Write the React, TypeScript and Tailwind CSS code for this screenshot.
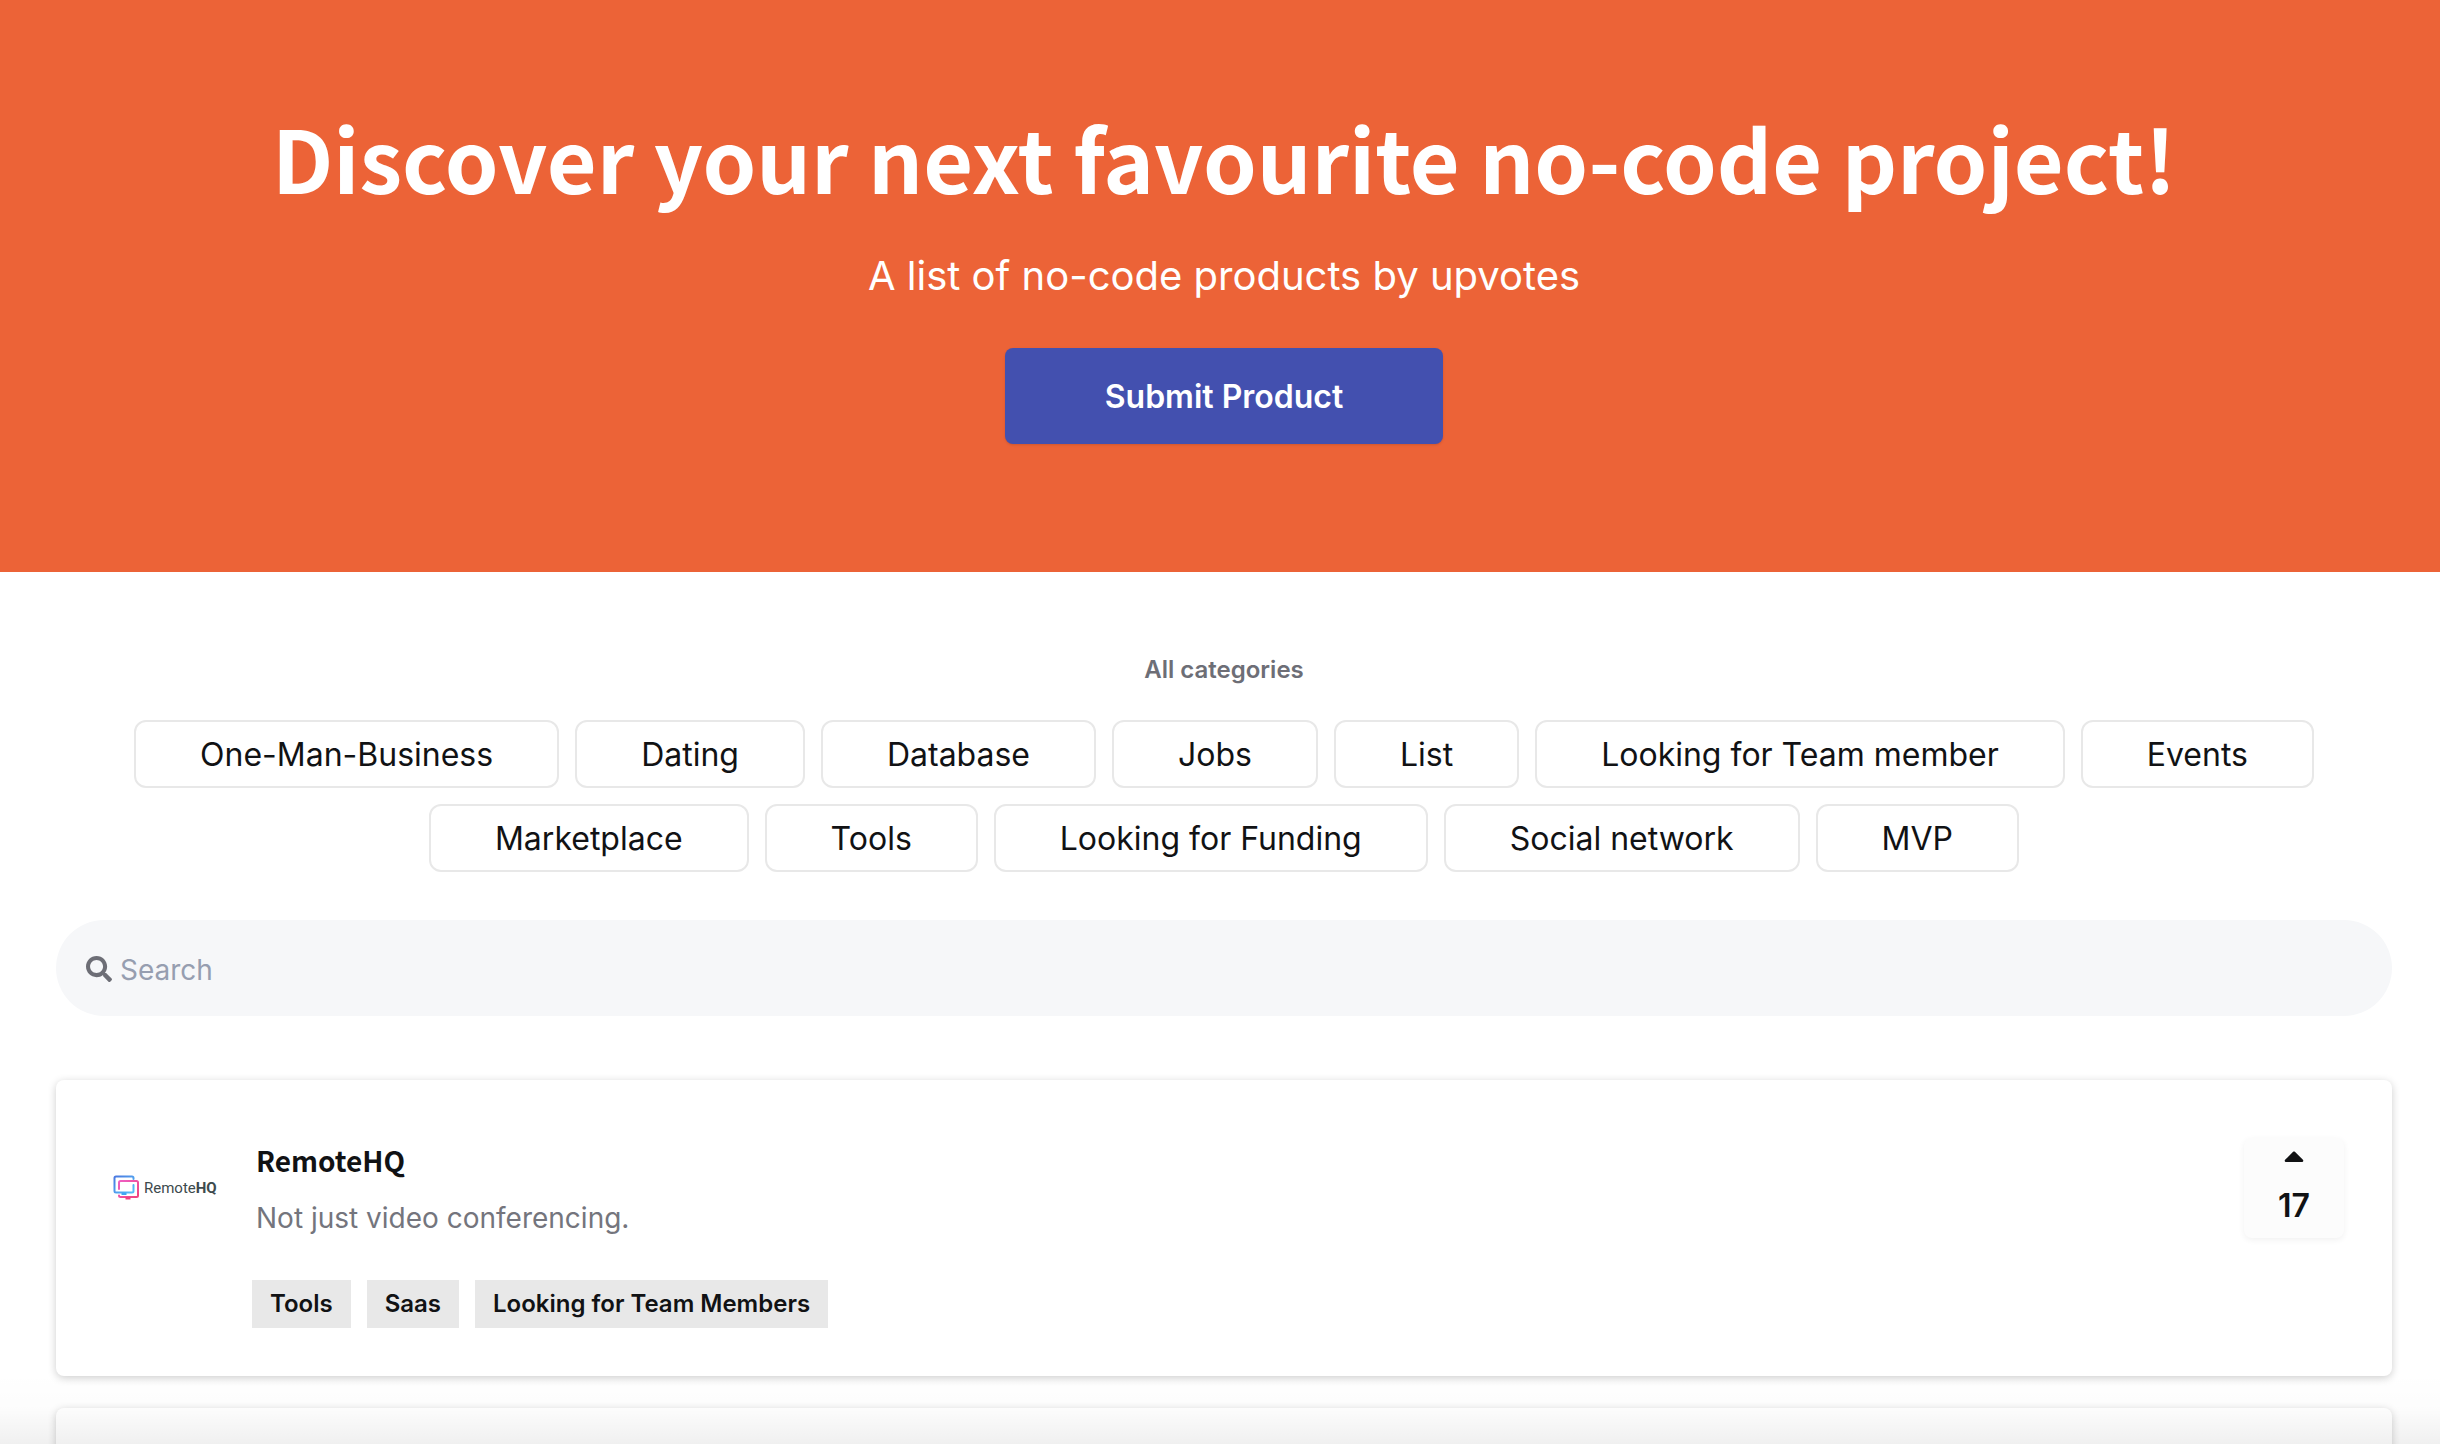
import React from 'react';
import { FaSearch, FaCaretUp } from 'react-icons/fa';

interface Product {
  name: string;
  tagline: string;
  votes: number;
  tags: string[];
}

const categories = [
  'One-Man-Business',
  'Dating',
  'Database',
  'Jobs',
  'List',
  'Looking for Team member',
  'Events',
  'Marketplace',
  'Tools',
  'Looking for Funding',
  'Social network',
  'MVP',
];

const remoteHq: Product = {
  name: 'RemoteHQ',
  tagline: 'Not just video conferencing.',
  votes: 17,
  tags: ['Tools', 'Saas', 'Looking for Team Members'],
};

const RemoteHqLogo: React.FC = () => (
  <svg className="h-8 w-28" viewBox="0 0 112 32" fill="none" aria-hidden="true">
    <defs>
      <linearGradient id="screen-blue" x1="0" y1="0" x2="1" y2="1">
        <stop offset="0" stopColor="#4a78e0" />
        <stop offset="1" stopColor="#56c0fa" />
      </linearGradient>
      <linearGradient id="screen-pink" x1="0" y1="0" x2="1" y2="1">
        <stop offset="0" stopColor="#ee5fc4" />
        <stop offset="1" stopColor="#f0437f" />
      </linearGradient>
    </defs>
    <path
      d="M21.500 7V6Q21.500 4.500 20 4.500H4Q2.500 4.500 2.500 6V19Q2.500 20.500 4 20.500H20Q21.500 20.500 21.500 19V13"
      stroke="url(#screen-blue)"
      strokeWidth="2"
      strokeLinecap="round"
    />
    <path d="M9.500 20.500h5v2.500h-5z" fill="#41a6f3" />
    <path
      d="M7 17V10.500Q7 9 8.500 9H24.500Q26 9 26 10.500V23.500Q26 25 24.500 25H8.500Q7 25 7 23.500"
      stroke="url(#screen-pink)"
      strokeWidth="2"
      strokeLinecap="round"
    />
    <path d="M13.500 25h5v2.500h-5z" fill="#f0437f" />
    <text x="32" y="21" fontSize="15" fill="#3d4a4d" className="font-['Roboto',sans-serif]">
      Remote
      <tspan fontWeight="700">HQ</tspan>
    </text>
  </svg>
);

const Hero: React.FC = () => (
  <header className="flex flex-col items-center bg-[#ec6337] pt-24 pb-32 pl-2 text-center text-white">
    <h1 className="font-['Noto_Sans_CJK_SC',sans-serif] text-[86px] leading-[122px] font-bold">
      Discover your next favourite no-code project!
    </h1>
    <p className="mt-7.5 text-[40px] leading-[56px] font-normal">A list of no-code products by upvotes</p>
    <button
      type="button"
      className="mt-11 h-24 rounded-lg bg-[#4350af] px-25 pt-0.5 text-[32px] font-semibold shadow-sm"
    >
      Submit Product
    </button>
  </header>
);

const CategoryList: React.FC = () => (
  <nav aria-label="All categories" className="flex flex-col items-center">
    <h2 className="text-2xl leading-9 font-semibold text-[#6d6e76]">All categories</h2>
    <ul className="mt-8 flex flex-wrap justify-center gap-4 px-16">
      {categories.map((category) => (
        <li key={category}>
          <button
            type="button"
            className="h-17 rounded-xl border-2 border-[#e8e8e8] px-16 pt-0.5 text-[32px] leading-10 text-[#111214]"
          >
            {category}
          </button>
        </li>
      ))}
    </ul>
  </nav>
);

const SearchBar: React.FC = () => (
  <label className="mt-12 flex h-24 items-center gap-2 rounded-full bg-[#f6f7f9] px-7.5 pt-0.5">
    <FaSearch className="size-6.5 text-[#6d6e76]" aria-hidden="true" />
    <input
      type="search"
      aria-label="Search"
      placeholder="Search"
      className="min-w-0 flex-1 bg-transparent pt-0.5 text-[28px] leading-10 outline-none placeholder:text-[#969eb0]"
    />
  </label>
);

const ProductCard: React.FC<{ product?: Product }> = ({ product }) => (
  <article className="flex min-h-74 items-start rounded-lg bg-white pt-14 pr-12 pb-12 pl-14 shadow-[0_2px_8px_rgba(0,0,0,0.2)]">
    {product && (
      <>
        <div className="mt-9 w-35 shrink-0">
          <RemoteHqLogo />
        </div>
        <div className="flex-1">
          <div className="pl-1">
            <h3 className="font-['Noto_Sans_CJK_SC',sans-serif] text-[28px] leading-12 font-bold text-[#111214]">
              {product.name}
            </h3>
            <p className="mt-3.5 text-[28px] leading-10 text-[#74757d]">{product.tagline}</p>
          </div>
          <ul className="mt-10.5 flex gap-4">
            {product.tags.map((tag) => (
              <li key={tag} className="bg-[#e8e8e8] px-4.5 text-2xl leading-12 font-semibold text-[#111214]">
                {tag}
              </li>
            ))}
          </ul>
        </div>
        <button
          type="button"
          aria-label={`Upvote ${product.name}`}
          className="mt-0.5 flex size-25 flex-col items-center gap-2.5 rounded-lg bg-[#fcfcfc] pt-0.5 text-[32px] leading-12 font-semibold text-[#111214] shadow-[0_2px_6px_rgba(0,0,0,0.06)]"
        >
          <FaCaretUp className="size-8" aria-hidden="true" />
          <span>{product.votes}</span>
        </button>
      </>
    )}
  </article>
);

const App: React.FC = () => {
  return (
    <div className="relative h-screen overflow-hidden bg-white font-['Inter',sans-serif]">
      <Hero />
      <main className="pt-20 pr-12 pl-14">
        <CategoryList />
        <SearchBar />
        <section aria-label="Products" className="mt-16 flex flex-col gap-8">
          <ProductCard product={remoteHq} />
          <ProductCard />
        </section>
      </main>
      {/* Fade at the bottom edge of the window */}
      <div className="pointer-events-none absolute inset-x-0 bottom-0 h-18 bg-linear-to-b from-transparent via-black/1 to-black/6" />
    </div>
  );
};

export default App;
